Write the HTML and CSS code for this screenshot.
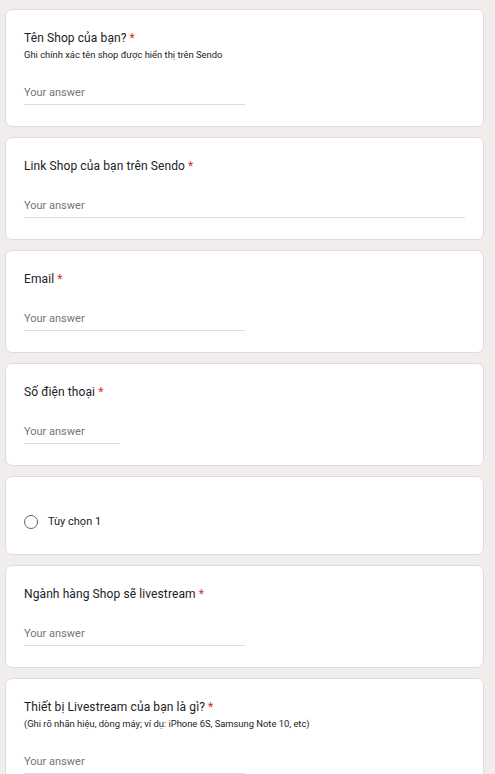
FILE: index.html
```html
<!DOCTYPE html>
<html lang="vi">
<head>
<meta charset="utf-8">
<title>Form</title>
<link rel="stylesheet" href="styles.css">
</head>
<body>
<main class="form">
  <section class="card">
    <div class="title">Tên Shop của bạn? <span class="req">*</span></div>
    <div class="desc">Ghi chính xác tên shop được hiển thị trên Sendo</div>
    <div class="answer answer-md">Your answer</div>
  </section>
  <section class="card">
    <div class="title">Link Shop của bạn trên Sendo <span class="req">*</span></div>
    <div class="answer answer-full">Your answer</div>
  </section>
  <section class="card">
    <div class="title">Email <span class="req">*</span></div>
    <div class="answer answer-md">Your answer</div>
  </section>
  <section class="card">
    <div class="title">Số điện thoại <span class="req">*</span></div>
    <div class="answer answer-sm">Your answer</div>
  </section>
  <section class="card card-radio">
    <label class="option"><span class="radio"></span><span class="opt-text">Tùy chọn 1</span></label>
  </section>
  <section class="card">
    <div class="title">Ngành hàng Shop sẽ livestream <span class="req">*</span></div>
    <div class="answer answer-md">Your answer</div>
  </section>
  <section class="card">
    <div class="title">Thiết bị Livestream của bạn là gì? <span class="req">*</span></div>
    <div class="desc">(Ghi rõ nhãn hiệu, dòng máy; ví dụ: iPhone 6S, Samsung Note 10, etc)</div>
    <div class="answer answer-md">Your answer</div>
  </section>
</main>
</body>
</html>
```
FILE: styles.css
```css
html, body {
  margin: 0;
  padding: 0;
  background: #f1eded;
  font-family: Roboto, "Noto Sans", Arial, sans-serif;
  color: #202124;
}
.form {
  width: 479px;
  margin-left: 5px;
  padding-top: 9px;
  display: flex;
  flex-direction: column;
  gap: 10px;
}
.card {
  background: #fff;
  border: 1px solid #dadce0;
  border-radius: 7px;
  padding: 20px 18px 21px 18px;
  box-sizing: border-box;
}
.title {
  font-size: 12px;
  line-height: 16px;
  letter-spacing: 0.1px;
  color: #202124;
}
.req {
  color: #d93025;
}
.desc {
  font-size: 9.4px;
  line-height: 12px;
  margin-top: 3px;
}
.answer {
  margin-top: 25px;
  font-size: 11px;
  line-height: 14px;
  color: #70757a;
  padding-bottom: 4px;
  border-bottom: 1px solid #dadce0;
}
.answer-md { width: 221px; }
.answer-sm { width: 96px; }
.answer-full { width: auto; }
.card-radio {
  padding-top: 38px;
  padding-bottom: 25px;
}
.option {
  display: flex;
  align-items: center;
  gap: 10px;
}
.radio {
  width: 14px;
  height: 14px;
  box-sizing: border-box;
  border: 1.5px solid #5f6368;
  border-radius: 50%;
}
.opt-text {
  font-size: 11px;
  line-height: 14px;
}
```
